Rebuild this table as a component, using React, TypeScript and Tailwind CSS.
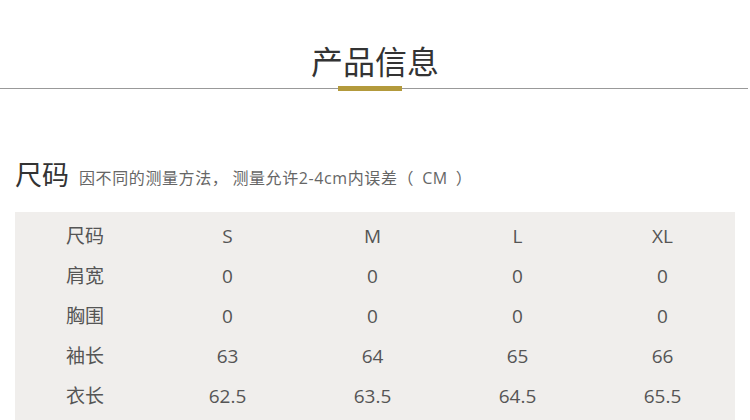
import React from 'react';

const sizes = ['S', 'M', 'L', 'XL'];

const rows: { label: string; values: string[] }[] = [
  { label: '尺码', values: sizes },
  { label: '肩宽', values: ['0', '0', '0', '0'] },
  { label: '胸围', values: ['0', '0', '0', '0'] },
  { label: '袖长', values: ['63', '64', '65', '66'] },
  { label: '衣长', values: ['62.5', '63.5', '64.5', '65.5'] },
];

const font = { fontFamily: '"Open Sans", "Noto Sans CJK SC", sans-serif' };

export default function App() {
  return (
    <div className="w-[750px] h-[420px] overflow-hidden bg-white" style={font}>
      {/* Section title */}
      <div className="pt-[40px]">
        <h2 className="text-center text-[32px] leading-[44px] text-[#333] font-normal">产品信息</h2>
        <div className="relative w-[748px] h-[8px]">
          <div className="absolute left-0 right-0 top-[4px] h-px bg-[#999]" />
          <div className="absolute left-[338px] top-[2px] w-[64px] h-[5px] bg-[#b39a3c]" />
        </div>
      </div>

      {/* Size chart */}
      <div className="px-[15px] mt-[66px]">
        <div className="flex items-end gap-[10px] h-[34px]">
          <span className="text-[27px] leading-[34px] text-[#333]">尺码</span>
          <span className="text-[16px] leading-[28px] text-[#666] tracking-[0.6px] whitespace-nowrap">
            因不同的测量方法<span className="pr-[4px]">，</span>测量允许2-4cm内误差<span className="pr-[8px]">（</span>CM<span className="pl-[8px]">）</span>
          </span>
        </div>

        <div className="mt-[20px] w-[720px] bg-[#f0eeec] pt-[4px] pb-[10px] text-[19px] text-[#555]">
          {rows.map((r) => (
            <div key={r.label} className="grid grid-cols-[140px_145px_145px_145px_145px] h-[40px] items-center text-center">
              <span>{r.label}</span>
              {r.values.map((v, i) => (
                <span key={i}>{v}</span>
              ))}
            </div>
          ))}
        </div>
      </div>
    </div>
  );
}
